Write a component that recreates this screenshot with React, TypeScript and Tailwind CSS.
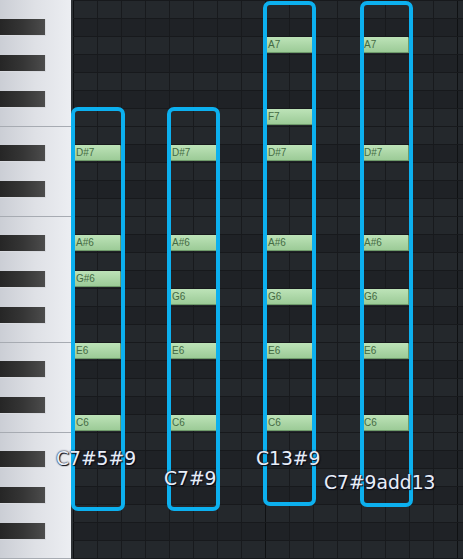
import React from "react";

const NAMES = ["B", "A#", "A", "G#", "G", "F#", "F", "E", "D#", "D", "C#", "C"];
const ROWS = Array.from({ length: 32 }, (_, i) => {
  const n = NAMES[i % 12];
  const oct = 7 - Math.floor(i / 12);
  return { name: n + oct, black: n.includes("#"), line: i > 0 && (n === "E" || n === "B") };
});
const rowOf = (name: string) => ROWS.findIndex((r) => r.name === name);

const COLS: { x: number; notes: string[] }[] = [
  { x: 1, notes: ["D#7", "A#6", "G#6", "E6", "C6"] },
  { x: 97, notes: ["D#7", "A#6", "G6", "E6", "C6"] },
  { x: 193, notes: ["A7", "F7", "D#7", "A#6", "G6", "E6", "C6"] },
  { x: 289, notes: ["A7", "D#7", "A#6", "G6", "E6", "C6"] },
];

const BOXES = [
  { l: 71, t: 107, w: 54, h: 404 },
  { l: 167, t: 107, w: 53, h: 404 },
  { l: 263, t: 1, w: 53, h: 505 },
  { l: 360, t: 1, w: 53, h: 506 },
];

const LABELS = [
  { text: "C7#5#9", l: 56, t: 450 },
  { text: "C7#9", l: 164, t: 470 },
  { text: "C13#9", l: 256, t: 450 },
  { text: "C7#9add13", l: 324, t: 474 },
];

export default function App() {
  return (
    <div className="relative flex w-[463px] h-[559px] overflow-hidden bg-[#22262a] font-['Liberation_Sans',sans-serif]">
      {/* Piano */}
      <div className="flex flex-col w-[73px] shrink-0 border-r-2 border-[#2e3236] bg-gradient-to-r from-[#cbced5] via-[#dfe1e6] to-[#eceef2]">
        {ROWS.map((r, i) => (
          <div
            key={i}
            className={`h-[18px] shrink-0 ${r.line ? "border-t border-[#a7abb2]" : ""}`}
          >
            {r.black && (
              <div className="mt-[1px] h-[17px] w-[46px] bg-gradient-to-r from-[#262626] via-[#353535] to-[#4c4c4c] border-r border-b border-[#d8dadf]" />
            )}
          </div>
        ))}
      </div>

      {/* Grid */}
      <div className="relative flex-1 flex flex-col">
        {ROWS.map((r, i) => (
          <div
            key={i}
            className={`flex h-[18px] shrink-0 border-t border-[#17191c] ${r.black ? "bg-[#1f2226]" : "bg-[#24282c]"}`}
          >
            {Array.from({ length: 17 }, (_, k) => (
              <div
                key={k}
                className={`w-[24px] shrink-0 border-l ${k % 8 === 0 ? "border-[#0f1113]" : "border-[#181a1d]"}`}
              />
            ))}
          </div>
        ))}

        {COLS.map((c, ci) =>
          c.notes.map((n) => (
            <div
              key={ci + n}
              className="absolute h-[16px] w-[47px] rounded-[1px] bg-gradient-to-b from-[#bde3b8] to-[#9ccb97] border-r border-b border-[#6f9b6b] pl-[2px] text-[10px] leading-[15px] text-[#456b43]"
              style={{ left: c.x, top: rowOf(n) * 18 + 1 }}
            >
              {n}
            </div>
          ))
        )}
      </div>

      {/* Chord boxes */}
      {BOXES.map((b, i) => (
        <div
          key={i}
          className="absolute border-4 border-[#0cb0ef] rounded-[7px]"
          style={{ left: b.l, top: b.t, width: b.w, height: b.h }}
        />
      ))}

      {/* Labels */}
      {LABELS.map((lb) => (
        <div
          key={lb.text}
          className="absolute whitespace-nowrap font-['DejaVu_Sans',sans-serif] text-[18.7px] leading-[18px] text-[#e9eef7] [text-shadow:0_0_1px_#1a2440,0_0_2px_#1a2440,1px_1px_1px_#000]"
          style={{ left: lb.l, top: lb.t }}
        >
          {lb.text}
        </div>
      ))}
    </div>
  );
}
